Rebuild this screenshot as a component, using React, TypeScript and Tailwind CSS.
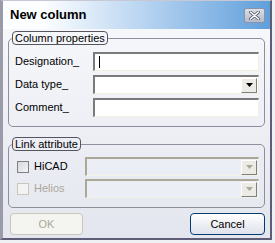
import React from "react";

const font = "font-['Liberation_Sans',Arial,sans-serif]";

const Sunken = ({ children, disabled }: { children?: React.ReactNode; disabled?: boolean }) => (
  <div
    className={`flex h-[19px] flex-1 items-center border-t-2 border-l-2 border-b border-r ${
      disabled
        ? "border-t-[#aca899] border-l-[#aca899] border-b-[#f4f2e6] border-r-[#f4f2e6] bg-[#eceef5]"
        : "border-t-[#7a7a7a] border-l-[#7a7a7a] border-b-[#f1efe2] border-r-[#f1efe2] bg-white"
    }`}
  >
    {children}
  </div>
);

const DropButton = ({ disabled }: { disabled?: boolean }) => (
  <div className="ml-auto mr-[1px] flex h-[15px] w-[16px] items-center justify-center border border-t-white border-l-white border-b-[#808080] border-r-[#808080] bg-[#ecebe6]">
    <svg width="7" height="4" viewBox="0 0 7 4">
      <path d="M0 0h7L3.5 4z" fill={disabled ? "#aca899" : "#000"} />
    </svg>
  </div>
);

const Checkbox = ({ disabled }: { disabled?: boolean }) => (
  <div
    className={`h-[12px] w-[12px] border ${
      disabled ? "border-[#c9c7ba] bg-[#f2f2f2]" : "border-[#7f7f85] bg-gradient-to-br from-[#d8d8dc] to-[#f4f4f6]"
    }`}
  />
);

export default function App() {
  const rows = ["Designation_", "Data type_", "Comment_"];
  return (
    <div className={`h-[243px] w-[275px] bg-[#eef0f4] ${font}`}>
      <div className="flex h-[240px] w-[272px] flex-col border-l-[3px] border-r-2 border-b-2 border-t border-l-[#9a9aa8] border-r-[#5d5d78] border-b-[#5d5d78] border-t-[#c8c8d4]">
        <div className="flex h-[28px] items-center bg-gradient-to-r from-[#fdfeff] from-15% to-[#5f9fdb] pl-[7px] pr-[5px]">
          <span className="text-[13px] font-bold text-black">New column</span>
          <div className="ml-auto flex h-[15px] w-[21px] items-center justify-center rounded-[2px] border border-[#8b93a8] bg-gradient-to-b from-[#dde0e8] to-[#b4bac8]">
            <svg width="11" height="9" viewBox="0 0 11 9">
              <path d="M1.5 1l8 7M9.5 1l-8 7" stroke="#5a6070" strokeWidth="3" strokeLinecap="round" />
              <path d="M1.5 1l8 7M9.5 1l-8 7" stroke="#fff" strokeWidth="1.4" strokeLinecap="round" />
            </svg>
          </div>
        </div>
        <div className="flex flex-1 flex-col bg-gradient-to-b from-[#f6f7fa] to-[#e4e6ef] pl-[5px] pr-[5px]">
          <fieldset className="mt-[2px] rounded-[5px] border border-[#8e8e9c] p-0 pb-[9px] pl-[6px] pr-[5px]">
            <legend className="ml-[-3px] rounded-[4px] border border-[#555560] px-[2px] text-[11px] leading-[12px] text-black">
              Column properties
            </legend>
            <div className="flex flex-col gap-[4px] pt-[7px]">
              {rows.map((r, i) => (
                <div key={r} className="flex items-center">
                  <span className="w-[78px] text-[11px] text-black">{r}</span>
                  <Sunken>
                    {i === 0 && <div className="ml-[4px] h-[12px] w-[1px] bg-black" />}
                    {i === 1 && <DropButton />}
                  </Sunken>
                </div>
              ))}
            </div>
          </fieldset>
          <fieldset className="mt-[10px] rounded-[5px] border border-[#8e8e9c] p-0 pb-[9px] pl-[8px] pr-[5px]">
            <legend className="ml-[-5px] rounded-[4px] border border-[#555560] px-[2px] text-[11px] leading-[12px] text-black">
              Link attribute
            </legend>
            <div className="flex flex-col gap-[3px] pt-[6px]">
              <div className="flex items-center">
                <div className="flex w-[68px] items-center gap-[5px]">
                  <Checkbox />
                  <span className="text-[11px] text-black">HiCAD</span>
                </div>
                <Sunken disabled>
                  <DropButton disabled />
                </Sunken>
              </div>
              <div className="flex items-center">
                <div className="flex w-[68px] items-center gap-[5px]">
                  <Checkbox disabled />
                  <span className="text-[11px] text-[#aca899]">Helios</span>
                </div>
                <Sunken disabled>
                  <DropButton disabled />
                </Sunken>
              </div>
            </div>
          </fieldset>
          <div className="mt-[5px] flex items-center justify-between pl-[2px]">
            <div className="flex h-[22px] w-[73px] items-center justify-center rounded-[4px] border border-[#c9c7ba] bg-[#f4f4f0] text-[11px] text-[#aca899]">
              OK
            </div>
            <div className="flex h-[22px] w-[75px] items-center justify-center rounded-[4px] border border-[#003c74] bg-gradient-to-b from-white to-[#dfe2ec] text-[11px] text-black">
              Cancel
            </div>
          </div>
        </div>
      </div>
    </div>
  );
}
